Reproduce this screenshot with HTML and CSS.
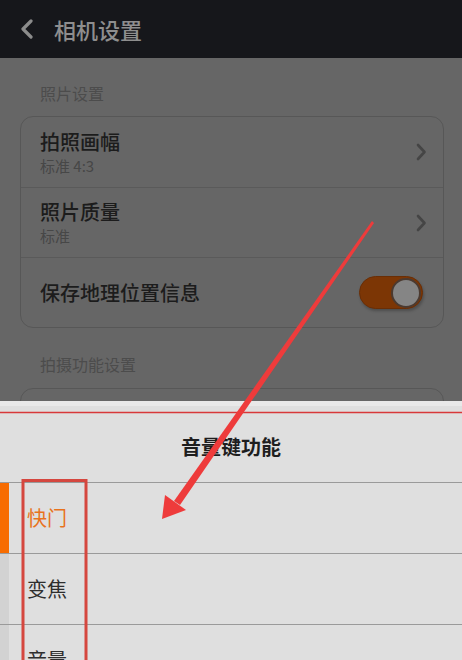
FILE: index.html
```html
<!DOCTYPE html>
<html lang="zh">
<head>
<meta charset="utf-8">
<link rel="stylesheet" href="styles.css">
</head>
<body>
<div class="screen">
  <header class="topbar">
    <svg class="back" width="16" height="20" viewBox="0 0 16 20"><path d="M12 2 L4 10 L12 18" fill="none" stroke="#8c8c8c" stroke-width="3.2" stroke-linecap="round" stroke-linejoin="round"/></svg>
    <span class="title">相机设置</span>
  </header>
  <main class="content">
    <div class="section-label">照片设置</div>
    <div class="card">
      <div class="row">
        <div class="row-text">
          <div class="row-title">拍照画幅</div>
          <div class="row-sub">标准 4:3</div>
        </div>
        <svg class="chev" width="12" height="18" viewBox="0 0 12 18"><path d="M3 2 L9.5 9 L3 16" fill="none" stroke="#454545" stroke-width="2.6" stroke-linecap="round" stroke-linejoin="round"/></svg>
      </div>
      <div class="row">
        <div class="row-text">
          <div class="row-title">照片质量</div>
          <div class="row-sub">标准</div>
        </div>
        <svg class="chev" width="12" height="18" viewBox="0 0 12 18"><path d="M3 2 L9.5 9 L3 16" fill="none" stroke="#454545" stroke-width="2.6" stroke-linecap="round" stroke-linejoin="round"/></svg>
      </div>
      <div class="row">
        <div class="row-text">
          <div class="row-title">保存地理位置信息</div>
        </div>
        <div class="toggle"><div class="knob"></div></div>
      </div>
    </div>
    <div class="section-label second">拍摄功能设置</div>
    <div class="card"><div class="row"></div></div>
  </main>
  <section class="sheet">
    <div class="sheet-top"></div>
    <div class="sheet-title">音量键功能</div>
    <div class="option selected"><span class="strip"></span><span class="opt-text">快门</span></div>
    <div class="option"><span class="strip"></span><span class="opt-text">变焦</span></div>
    <div class="option"><span class="strip"></span><span class="opt-text">音量</span></div>
  </section>
  <svg class="annot" width="462" height="660" viewBox="0 0 462 660">
    <line x1="0" y1="412.5" x2="462" y2="412.5" stroke="#d8383a" stroke-width="1.3"/>
    <rect x="23" y="480.5" width="63" height="200" fill="none" stroke="#d5473f" stroke-width="3"/>
    <polygon points="372,221 374,223 180,505 174,501" fill="#ee3b3b"/>
    <polygon points="162,519 165,495 186,510" fill="#ee3b3b"/>
  </svg>
</div>
</body>
</html>
```
FILE: styles.css
```css
* { box-sizing: border-box; }
html, body { margin: 0; padding: 0; }
body {
  width: 462px;
  height: 660px;
  overflow: hidden;
  font-family: "Noto Sans CJK SC", "Noto Sans", sans-serif;
  background: #666666;
}
.screen {
  position: relative;
  width: 462px;
  height: 660px;
  display: flex;
  flex-direction: column;
  overflow: hidden;
}
.topbar {
  height: 58px;
  flex: none;
  background: #16171b;
  display: flex;
  align-items: center;
  padding-left: 19px;
  gap: 19px;
}
.topbar .title {
  color: #8e8e8e;
  font-size: 22px;
  line-height: 28px;
  font-weight: 500;
}
.content {
  height: 343px;
  flex: none;
  overflow: hidden;
  background: #666666;
  padding: 23px 18px 0 20px;
}
.section-label {
  color: #4c4c4c;
  font-size: 16px;
  line-height: 24px;
  padding-left: 20px;
  margin-bottom: 11px;
}
.section-label.second {
  margin-top: 24px;
  margin-bottom: 12px;
}
.card {
  border: 1px solid #575757;
  border-radius: 13px;
}
.row {
  height: 70px;
  display: flex;
  align-items: center;
  padding: 0 18px 0 19px;
}
.row + .row { border-top: 1px solid #5a5a5a; }
.row-text { flex: 1; }
.row-title {
  color: #1c1c1c;
  font-size: 20px;
  line-height: 26px;
  font-weight: 500;
}
.row-sub {
  color: #474747;
  font-size: 15px;
  line-height: 20px;
  margin-top: 1px;
}
.chev { flex: none; margin-right: -2px; }
.toggle {
  width: 64px;
  height: 33px;
  border-radius: 17px;
  background: #7c3605;
  border: 1px solid #6a2e05;
  display: flex;
  justify-content: flex-end;
  align-items: center;
  padding-right: 1px;
  box-shadow: 1px 2px 3px rgba(0,0,0,0.25);
  margin-right: 2px;
}
.knob {
  width: 30px;
  height: 30px;
  border-radius: 50%;
  background: #858585;
  border: 2px solid #4b3a30;
}
.sheet {
  flex: 1;
  background: #dfdfdf;
  display: flex;
  flex-direction: column;
}
.sheet-top {
  height: 5px;
  background: #e9e9e9;
}
.sheet-title {
  height: 77px;
  display: flex;
  align-items: center;
  justify-content: center;
  font-size: 20px;
  font-weight: 700;
  color: #1e1e1e;
  padding-top: 4px;
  border-bottom: 1px solid #9a9a9a;
}
.option {
  height: 71px;
  flex: none;
  display: flex;
  align-items: center;
  border-bottom: 1px solid #9a9a9a;
}
.strip {
  width: 9px;
  align-self: stretch;
  background: #d2d2d2;
}
.option.selected .strip { background: #f76c00; }
.opt-text {
  padding-left: 18px;
  font-size: 20px;
  line-height: 26px;
  color: #2e2e2e;
}
.option.selected .opt-text { color: #e8721c; }
.annot {
  position: absolute;
  left: 0;
  top: 0;
  pointer-events: none;
}
```
